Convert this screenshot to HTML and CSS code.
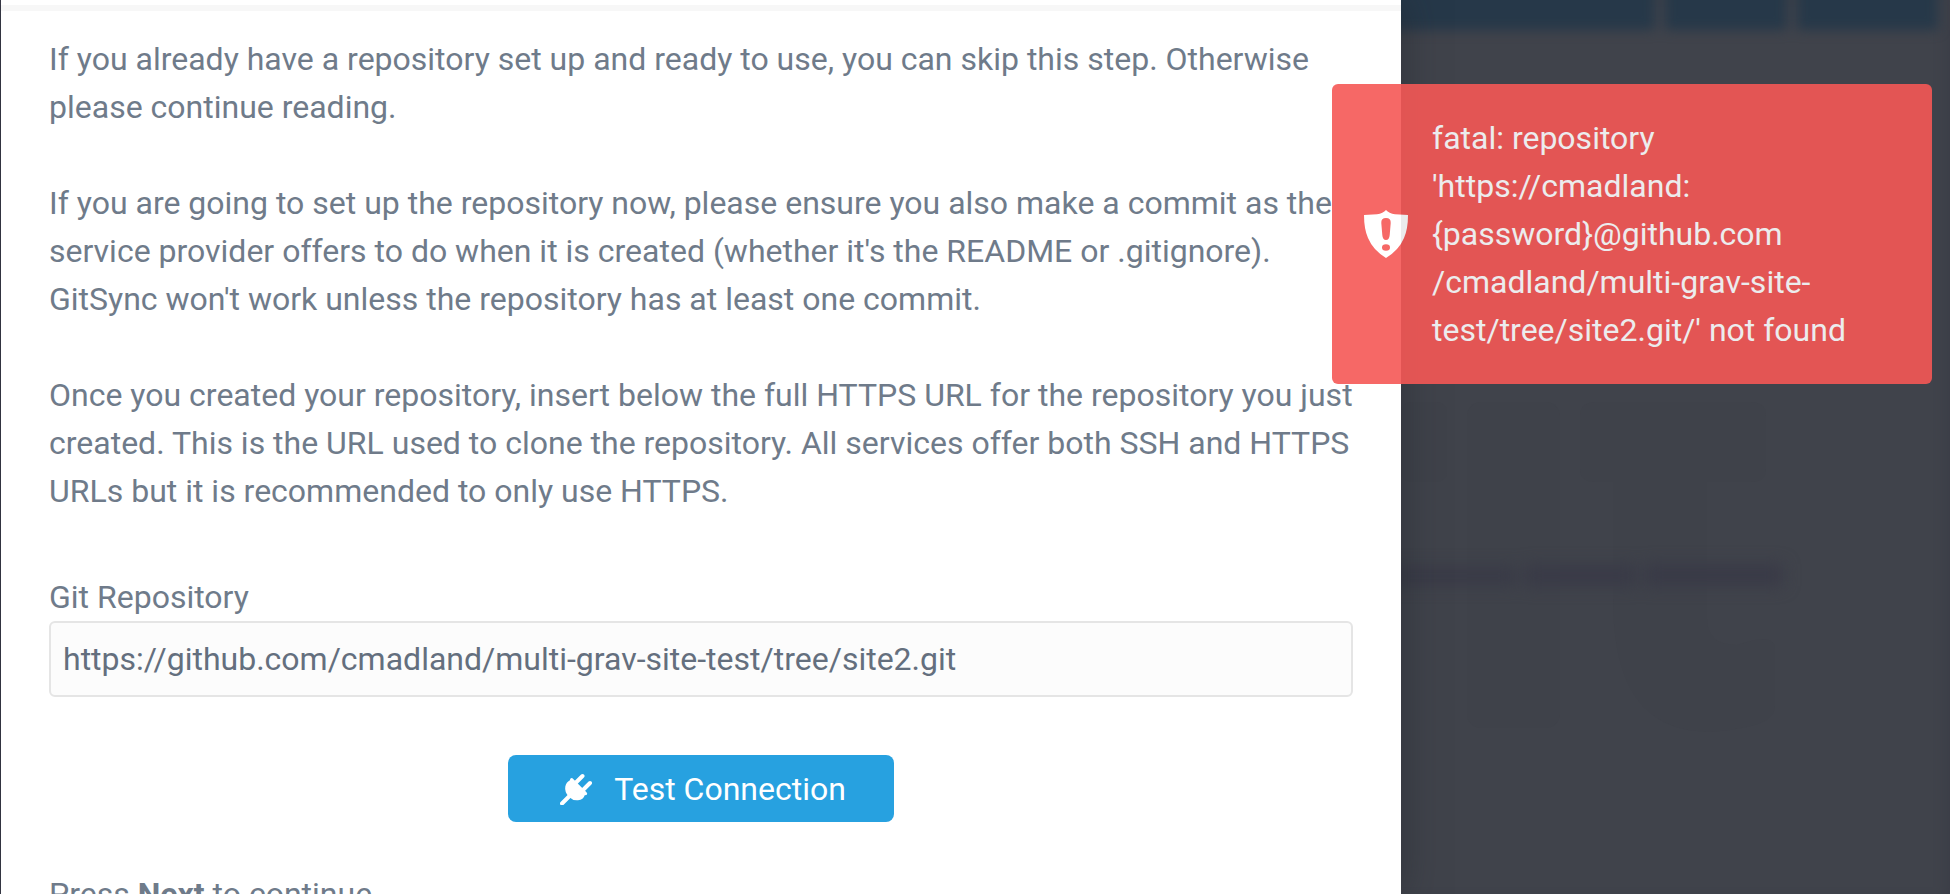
FILE: index.html
```html
<!DOCTYPE html>
<html lang="en">
<head>
<meta charset="utf-8">
<title>GitSync Wizard</title>
<link rel="stylesheet" href="styles.css">
</head>
<body>
<div class="shell">
  <main class="modal">
    <div class="modal-rule"></div>
    <form class="step">
      <p>If you already have a repository set up and ready to use, you can skip this step. Otherwise please continue reading.</p>
      <p>If you are going to set up the repository now, please ensure you also make a commit as the service provider offers to do when it is created (whether it's the README or .gitignore). GitSync won't work unless the repository has at least one commit.</p>
      <p>Once you created your repository, insert below the full HTTPS URL for the repository you just created. This is the URL used to clone the repository. All services offer both SSH and HTTPS URLs but it is recommended to only use HTTPS.</p>
      <div class="field">
        <label for="repo">Git Repository</label>
        <input id="repo" type="text" value="https://github.com/cmadland/multi-grav-site-test/tree/site2.git">
      </div>
      <button class="button" type="button">
        <svg class="plug" viewBox="0 0 32 32" aria-hidden="true">
          <path d="M2 30.500 L9 23.500 M15 10.500 L22.500 3 M22.500 17.500 L30 10" fill="none" stroke="#fff" stroke-width="4" stroke-linecap="round"/>
          <path d="M10.500 5.500 Q12 4.500 13.200 6 L26.500 19.300 Q28 20.700 26.500 22 L24.700 22.300 Q23.500 26.800 18 27.300 Q13 27.800 9 24 Q4.300 19 5.300 13.500 Q6.300 9 9.700 7.500 Z" fill="#fff"/>
        </svg>
        <span>Test Connection</span>
      </button>
      <p>Press <strong>Next</strong> to continue</p>
    </form>
  </main>
  <div class="backdrop" aria-hidden="true">
    <div class="dim-bar">
      <span class="dim-button dim-wide"></span>
      <span class="dim-button"></span>
      <span class="dim-button dim-last"></span>
    </div>
    <svg class="dim-art" viewBox="0 0 549 440">
      <g fill="#3f424a">
        <rect x="0" y="8" width="46" height="80" rx="10"/>
        <rect x="66" y="8" width="93" height="326" rx="14"/>
        <path d="M195 8H350Q365 8 365 22V75Q365 88 350 88H306V225Q306 251 336 251Q374 238 374 255V312Q374 326 350 332Q212 365 212 205V88H195Q179 88 179 75V22Q179 8 195 8Z"/>
      </g>
      <g class="dim-words" fill="#393a47">
        <rect x="-10" y="173" width="126" height="18"/>
        <rect x="124" y="171" width="112" height="21"/>
        <rect x="244" y="170" width="138" height="22"/>
      </g>
    </svg>
  </div>
</div>
<div class="toast" role="alert">
  <svg class="shield" viewBox="0 0 44 48" aria-hidden="true">
    <path fill-rule="evenodd" fill="#fff" d="M22 0 Q25 3.500 31 4.300 L44 5 Q44 19 40 28 Q35 40 22 48 Q9 40 4 28 Q0 19 0 5 L13 4.300 Q19 3.500 22 0 Z M22 8 Q17 8 17.300 13 L18.300 25 Q18.700 30 22 30 Q25.300 30 25.700 25 L26.700 13 Q27 8 22 8 Z M22 34.200 Q18 34.200 18 37.500 Q18 40.800 22 40.800 Q26 40.800 26 37.500 Q26 34.200 22 34.200 Z"/>
  </svg>
  <div class="toast-text">fatal: repository 'https://cmadland:<wbr>{password}@github.com<wbr>/cmadland/multi-grav-site-test/tree/site2.git/' not found</div>
</div>
</body>
</html>
```
FILE: styles.css
```css
* {
  box-sizing: border-box;
}

body {
  margin: 0;
  background: #40434b;
  color: #6f7b8a;
  font-family: Roboto, "Liberation Sans", sans-serif;
  font-size: 32px;
  line-height: 48px;
}

.shell {
  display: grid;
  grid-template-columns: minmax(0, 1fr) 549px;
  height: 100vh;
  overflow: hidden;
  padding-left: 1px;
  background: linear-gradient(to right, #393a48 1px, #40434b 1px);
}

.modal {
  z-index: 1;
  min-height: 100vh;
  background: #fff;
  box-shadow: 0 0 36px rgba(30, 35, 42, 0.5);
}

.modal-rule {
  margin-top: 5px;
  height: 6px;
  background: #f7f7f7;
}

.step {
  display: flex;
  flex-direction: column;
  gap: 48px;
  padding: 24px 48px;
}

.step p {
  margin: 0;
}

.field {
  display: flex;
  flex-direction: column;
  padding: 10px 0;
}

.field input {
  height: 76px;
  padding: 0 12px;
  border: 2px solid #e5e5e5;
  border-radius: 6px;
  background: #fcfcfc;
  color: #646f7e;
  font: inherit;
}

.button {
  display: flex;
  align-items: center;
  align-self: center;
  gap: 22px;
  height: 67px;
  padding: 0 48px 0 52px;
  border: 0;
  border-radius: 8px;
  background: #27a1e0;
  color: #fff;
  font: inherit;
}

.plug {
  width: 32px;
  height: 32px;
}

.backdrop {
  overflow: hidden;
  box-shadow: inset -10px 0 10px -4px #3c3f48;
}

.dim-bar {
  display: flex;
  gap: 10px;
  height: 30px;
  margin: 0 12px 0 -20px;
  filter: blur(6px);
}

.dim-button {
  width: 122px;
  margin-top: -20px;
  background: #263849;
}

.dim-wide {
  flex: 1;
}

.dim-last {
  width: 141px;
}

.dim-art {
  display: block;
  width: 100%;
  margin-top: 364px;
  overflow: visible;
}

.dim-words {
  filter: blur(8px);
}

.toast {
  position: fixed;
  z-index: 2;
  top: 84px;
  right: 18px;
  display: flex;
  align-items: center;
  gap: 24px;
  width: 600px;
  padding: 30px 48px 30px 32px;
  border-radius: 6px;
  background: #f55856;
  color: #fff;
  opacity: 0.9;
}

.shield {
  flex: none;
  width: 44px;
  height: 48px;
}
```
